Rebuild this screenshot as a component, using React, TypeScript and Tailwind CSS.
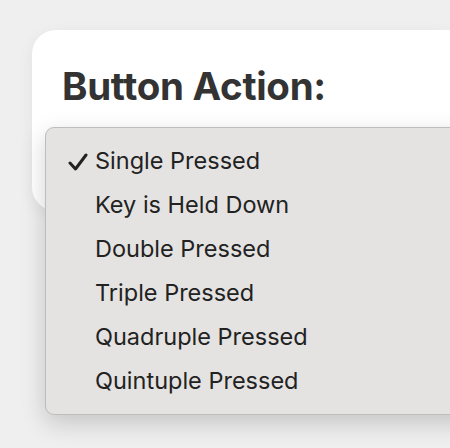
import React from "react"

const options = [
  "Single Pressed",
  "Key is Held Down",
  "Double Pressed",
  "Triple Pressed",
  "Quadruple Pressed",
  "Quintuple Pressed",
]

export default function App() {
  const selected = "Single Pressed"

  return (
    <div
      className="relative w-[450px] h-[448px] overflow-hidden bg-[#efefef]"
      style={{ fontFamily: "Inter, 'Noto Sans', sans-serif" }}
    >
      <div className="ml-[32px] mt-[30px] h-[181px] rounded-l-[24px] bg-white pl-[30px] pt-[37px] shadow-[0_4px_16px_rgba(0,0,0,0.06)]">
        <h1 className="text-[38.5px] font-bold leading-none tracking-[-0.3px] text-[#333333]">
          Button Action:
        </h1>
      </div>

      {/* popup menu */}
      <div className="absolute left-[45px] top-[127px] w-[440px] rounded-[9px] border border-[#bdbdbd] bg-[#e4e3e1] py-[11px] shadow-[0_8px_24px_rgba(0,0,0,0.18)]">
        {options.map((option) => (
          <div key={option} className="flex h-[44px] items-center">
            <div className="flex w-[49px] justify-end pr-[6px]">
              {option === selected && (
                <svg width="22" height="18" viewBox="0 0 22 18" className="mt-[2px]">
                  <path
                    d="M3 10 L8.5 16 L19 2"
                    fill="none"
                    stroke="#222"
                    strokeWidth="3"
                    strokeLinecap="round"
                    strokeLinejoin="round"
                  />
                </svg>
              )}
            </div>
            <span className="text-[23.5px] leading-none text-[#222222]">{option}</span>
          </div>
        ))}
      </div>
    </div>
  )
}
